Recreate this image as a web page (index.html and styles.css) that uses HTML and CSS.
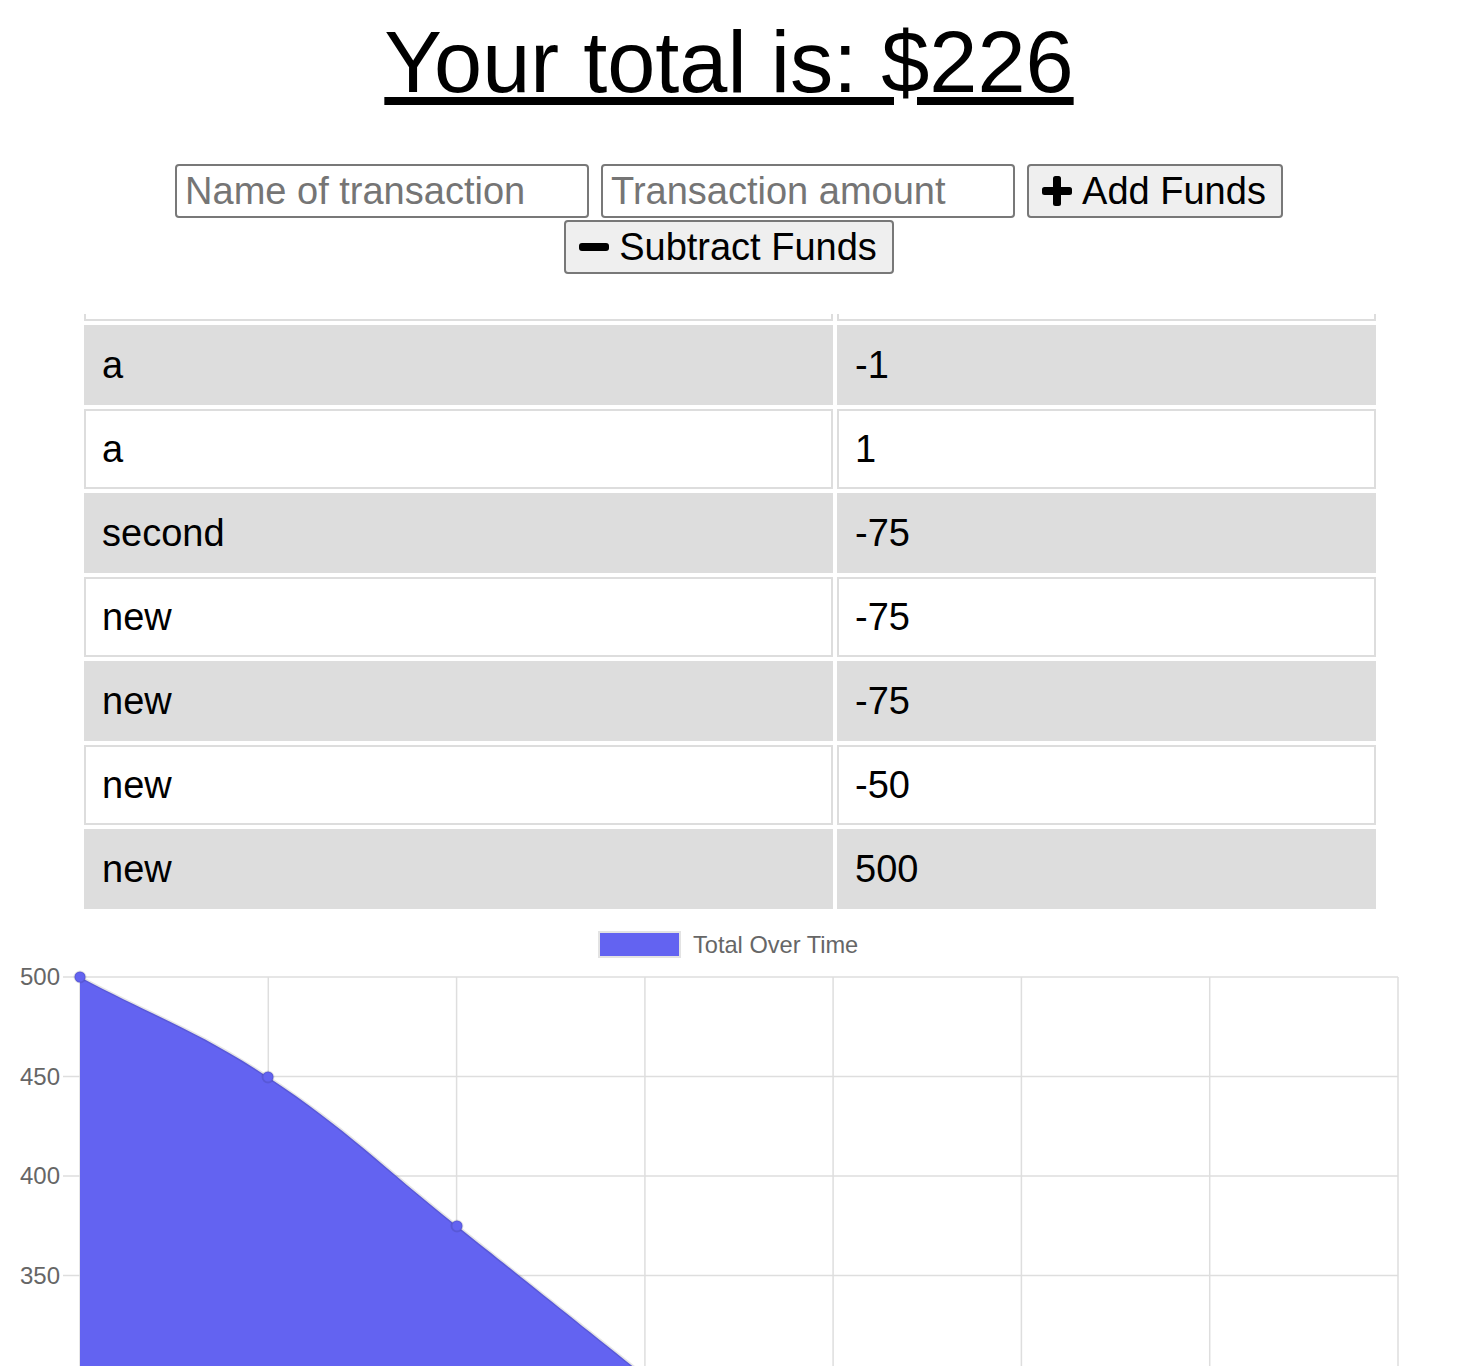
FILE: index.html
```html
<!DOCTYPE html>
<html lang="en">
<head>
<meta charset="utf-8">
<title>Budget Tracker</title>
<link rel="stylesheet" href="styles.css">
</head>
<body>
<h1 class="total">Your total is: $226</h1>

<form class="entry-form">
  <input class="field" type="text" placeholder="Name of transaction">
  <input class="field" type="number" placeholder="Transaction amount">
  <button class="btn" type="button">
    <svg class="icon" viewBox="0 0 30 30" width="30" height="30"><rect x="11" y="0" width="8" height="30" rx="2.5"/><rect x="0" y="11" width="30" height="8" rx="2.5"/></svg>
    <span>Add Funds</span>
  </button>
  <button class="btn" type="button">
    <svg class="icon" viewBox="0 0 30 30" width="30" height="30"><rect x="0" y="11" width="30" height="8" rx="3"/></svg>
    <span>Subtract Funds</span>
  </button>
</form>

<table class="tx-table">
  <thead>
    <tr><th class="col-name"><div class="head-stub"></div></th><th><div class="head-stub"></div></th></tr>
  </thead>
  <tbody>
    <tr class="shade"><td class="col-name">a</td><td>-1</td></tr>
    <tr><td class="col-name">a</td><td>1</td></tr>
    <tr class="shade"><td class="col-name">second</td><td>-75</td></tr>
    <tr><td class="col-name">new</td><td>-75</td></tr>
    <tr class="shade"><td class="col-name">new</td><td>-75</td></tr>
    <tr><td class="col-name">new</td><td>-50</td></tr>
    <tr class="shade"><td class="col-name">new</td><td>500</td></tr>
  </tbody>
</table>

<svg class="chart" width="1458" height="500" viewBox="0 913 1458 500">
  <rect x="599" y="932" width="81" height="25" fill="#6363f1" stroke="#e3e3e3" stroke-width="2"/>
  <text class="legend" x="693" y="953">Total Over Time</text>

  <g class="grid">
    <line x1="63" y1="977" x2="1398" y2="977"/>
    <line x1="63" y1="1076.5" x2="1398" y2="1076.5"/>
    <line x1="63" y1="1176" x2="1398" y2="1176"/>
    <line x1="63" y1="1275.5" x2="1398" y2="1275.5"/>
    <line x1="63" y1="1375" x2="1398" y2="1375"/>
    <line x1="80" y1="977" x2="80" y2="1413"/>
    <line x1="268.3" y1="977" x2="268.3" y2="1413"/>
    <line x1="456.6" y1="977" x2="456.6" y2="1413"/>
    <line x1="644.9" y1="977" x2="644.9" y2="1413"/>
    <line x1="833.1" y1="977" x2="833.1" y2="1413"/>
    <line x1="1021.4" y1="977" x2="1021.4" y2="1413"/>
    <line x1="1209.7" y1="977" x2="1209.7" y2="1413"/>
    <line x1="1398" y1="977" x2="1398" y2="1413"/>
  </g>

  <g class="ylabels">
    <text x="60" y="985">500</text>
    <text x="60" y="1084.5">450</text>
    <text x="60" y="1184">400</text>
    <text x="60" y="1283.5">350</text>
    <text x="60" y="1383">300</text>
  </g>

  <path class="area" d="M80,977 C155.2,1017 197.2,1030.2 268,1077 C348,1129.8 381.6,1166.2 457,1226 C532.4,1285.8 569.8,1316.2 645,1376 C720,1436 740,1450 760,1470 L760,1420 L80,1420 Z"/>
  <path class="line" d="M80,977 C155.2,1017 197.2,1030.2 268,1077 C348,1129.8 381.6,1166.2 457,1226 C532.4,1285.8 569.8,1316.2 645,1376"/>

  <circle class="pt" cx="80" cy="977" r="5.5"/>
  <circle class="pt" cx="268" cy="1077" r="5.5"/>
  <circle class="pt" cx="457" cy="1226" r="5.5"/>
  <circle class="pt" cx="645" cy="1376" r="5.5"/>
</svg>
</body>
</html>
```

FILE: styles.css
```css
html, body {
  margin: 0;
  padding: 0;
  background: #ffffff;
}

body {
  font-family: "Liberation Sans", Arial, sans-serif;
  color: #000000;
}

.total {
  margin: 13px 0 0;
  font-size: 86.5px;
  font-weight: normal;
  text-align: center;
  text-decoration: underline;
  line-height: normal;
}

.entry-form {
  margin: 52px auto 0;
  max-width: 1300px;
  display: flex;
  flex-wrap: wrap;
  justify-content: center;
  gap: 2px 12px;
}

.field {
  box-sizing: border-box;
  width: 414px;
  height: 54px;
  margin: 0;
  padding: 0 8px;
  border: 2px solid #787878;
  border-radius: 4px;
  font-family: "Liberation Sans", Arial, sans-serif;
  font-size: 38px;
  color: #000000;
  background: #ffffff;
  -moz-appearance: textfield;
}

.field::placeholder {
  color: #757575;
}

.field::-webkit-outer-spin-button,
.field::-webkit-inner-spin-button {
  -webkit-appearance: none;
  margin: 0;
}

.btn {
  box-sizing: border-box;
  height: 54px;
  margin: 0;
  padding: 0 15px 0 13px;
  display: inline-flex;
  align-items: center;
  gap: 10px;
  border: 2px solid #787878;
  border-radius: 4px;
  background: #efefef;
  font-family: "Liberation Sans", Arial, sans-serif;
  font-size: 38px;
  color: #000000;
}

.icon {
  display: block;
  fill: #000000;
  flex: none;
}

.tx-table {
  width: 1300px;
  margin: 36px 0 0 calc(50% - 649px);
  border-collapse: separate;
  border-spacing: 4px;
  table-layout: fixed;
}

.tx-table th {
  padding: 0;
  font-size: 0;
  line-height: 0;
  border: 2px solid #dddddd;
  border-top: 0;
}

.head-stub {
  height: 5px;
}

.tx-table td {
  padding: 16px;
  border: 2px solid #dddddd;
  font-size: 38px;
  line-height: 44px;
  text-align: left;
}

.tx-table .col-name {
  width: 713px;
}

.tx-table th.col-name {
  width: 745px;
}

.tx-table tr.shade td {
  background: #dddddd;
}

.chart {
  display: block;
}

.legend {
  font-family: "Liberation Sans", Arial, sans-serif;
  font-size: 23.6px;
  fill: #666666;
}

.grid line {
  stroke: #dedede;
  stroke-width: 1.5;
}

.ylabels text {
  font-family: "Liberation Sans", Arial, sans-serif;
  font-size: 24px;
  fill: #666666;
  text-anchor: end;
}

.area {
  fill: #6363f1;
}

.line {
  fill: none;
  stroke: rgba(0, 0, 0, 0.1);
  stroke-width: 3;
}

.pt {
  fill: #6363f1;
  stroke: rgba(0, 0, 0, 0.1);
  stroke-width: 2;
}
```
